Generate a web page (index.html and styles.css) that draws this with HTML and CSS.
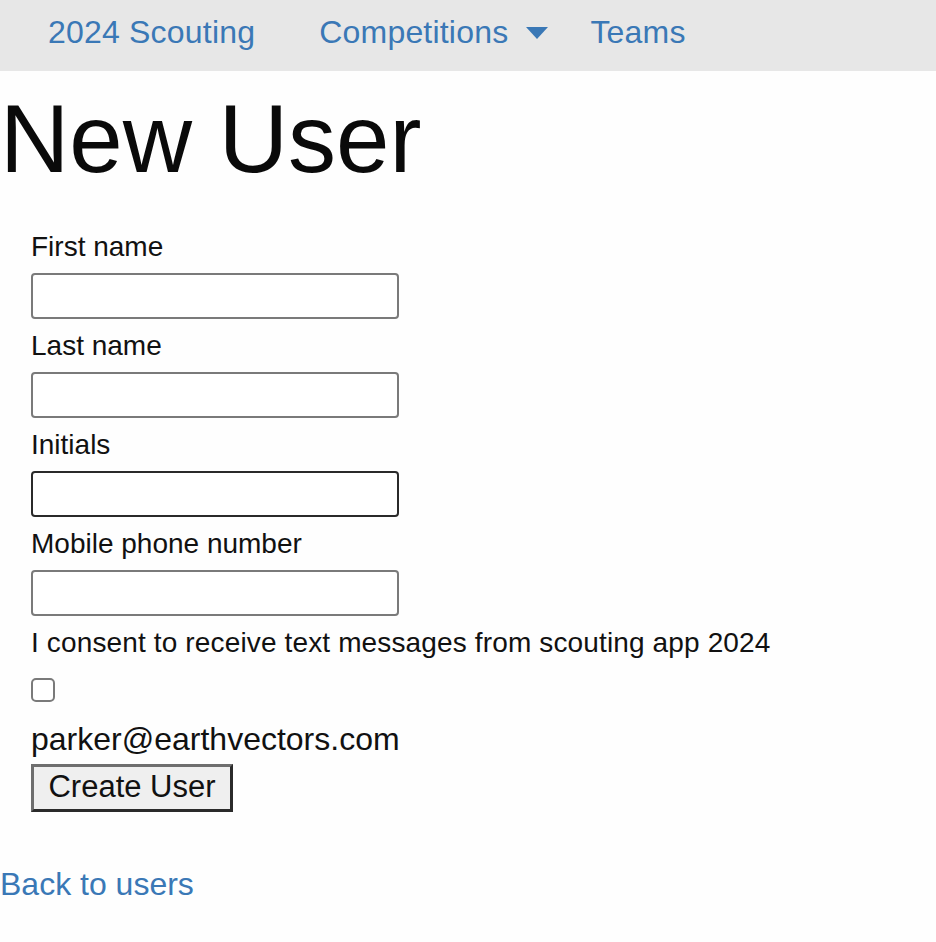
FILE: index.html
```html
<!DOCTYPE html>
<html lang="en">
<head>
<meta charset="utf-8">
<title>New User</title>
<link rel="stylesheet" href="styles.css">
</head>
<body>
<nav class="navbar">
  <a class="nav-link brand" href="#">2024 Scouting</a>
  <a class="nav-link dropdown" href="#">Competitions <span class="caret"></span></a>
  <a class="nav-link" href="#">Teams</a>
</nav>
<h1 class="title">New User</h1>
<form class="user-form">
  <label class="field-label">First name</label>
  <input class="text-input" type="text">
  <label class="field-label">Last name</label>
  <input class="text-input" type="text">
  <label class="field-label">Initials</label>
  <input class="text-input focused" type="text">
  <label class="field-label">Mobile phone number</label>
  <input class="text-input" type="text">
  <label class="field-label consent">I consent to receive text messages from scouting app 2024</label>
  <span class="checkbox"></span>
  <div class="email">parker@earthvectors.com</div>
  <button class="submit" type="button">Create User</button>
</form>
<a class="back-link" href="#">Back to users</a>
</body>
</html>
```
FILE: styles.css
```css
html, body {
  margin: 0;
  padding: 0;
  background: #fefefe;
  font-family: "Liberation Sans", Arial, sans-serif;
  color: #111;
}
.navbar {
  height: 71px;
  background: #e7e7e7;
  display: flex;
  align-items: center;
  padding-left: 48px;
  padding-bottom: 6px;
  box-sizing: border-box;
}
.nav-link {
  color: #3a78b6;
  text-decoration: none;
  font-size: 32px;
  line-height: 37px;
  letter-spacing: 0.2px;
}
.brand {
  margin-right: 64px;
}
.dropdown {
  display: flex;
  align-items: center;
  margin-right: 42px;
}
.caret {
  display: inline-block;
  width: 0;
  height: 0;
  margin-left: 18px;
  margin-top: 0;
  border-left: 11px solid transparent;
  border-right: 11px solid transparent;
  border-top: 12px solid #3a78b6;
}
.title {
  margin: 13px 0 0 0;
  font-size: 96px;
  font-weight: normal;
  line-height: 110px;
  color: #0a0a0a;
}
.user-form {
  display: flex;
  flex-direction: column;
  align-items: flex-start;
  padding-left: 31px;
  margin-top: 37px;
}
.field-label {
  font-size: 28px;
  line-height: 32px;
  color: #111;
}
.consent {
  letter-spacing: 0.14px;
}
.text-input {
  box-sizing: border-box;
  width: 368px;
  height: 46px;
  margin: 10px 0 11px 0;
  border: 2px solid #7a7a7a;
  border-radius: 4px;
  background: #fff;
  padding: 0 8px;
  font-size: 28px;
}
.text-input.focused {
  border-color: #2a2a2a;
}
.checkbox {
  box-sizing: border-box;
  width: 24px;
  height: 24px;
  margin: 19px 0 19px 0;
  border: 2px solid #7a7a7a;
  border-radius: 5px;
  background: #fff;
}
.email {
  font-size: 32px;
  line-height: 37px;
}
.submit {
  box-sizing: border-box;
  margin-top: 6px;
  width: 202px;
  height: 48px;
  padding: 0 0 3px 0;
  font-family: "Liberation Sans", Arial, sans-serif;
  font-size: 31px;
  color: #111;
  background: #efefef;
  border: 3px solid;
  border-color: #6e6e6e #2a2a2a #2a2a2a #6e6e6e;
}
.back-link {
  display: block;
  margin-top: 54px;
  font-size: 32px;
  line-height: 37px;
  color: #3a78b6;
  text-decoration: none;
}
```
